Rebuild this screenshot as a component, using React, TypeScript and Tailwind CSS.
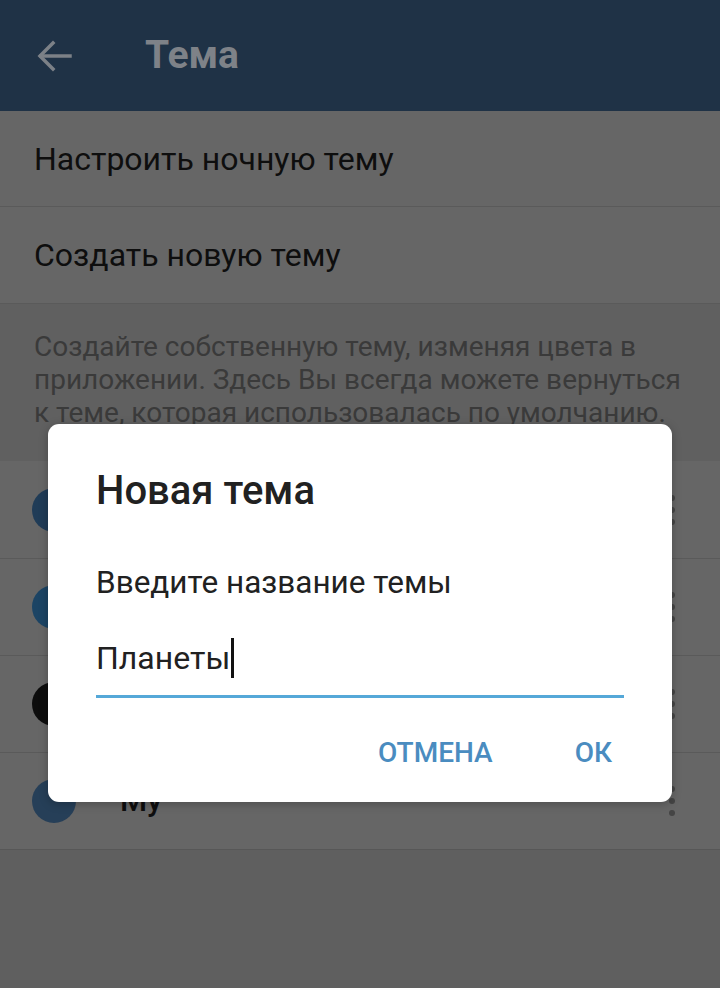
import React from 'react';

// names of the first rows sit fully behind the dialog, so they are left out
const themes = [
  { name: '', color: 'bg-[#203c57]' },
  { name: '', color: 'bg-[#1c4464]' },
  { name: 'Ночная', color: 'bg-[#0d0d0d]' },
  { name: 'Му', color: 'bg-[#263f58]' },
];

function Dots() {
  return (
    <div className="flex flex-col items-center gap-[6px]">
      <span className="h-[6px] w-[6px] rounded-full bg-[#454545]" />
      <span className="h-[6px] w-[6px] rounded-full bg-[#454545]" />
      <span className="h-[6px] w-[6px] rounded-full bg-[#454545]" />
    </div>
  );
}

export default function App() {
  return (
    <div
      className="relative h-[988px] w-[720px] overflow-hidden bg-[#5f5f5f]"
      style={{ fontFamily: 'Roboto, "Noto Sans", sans-serif' }}
    >
      <div className="flex h-[111px] items-center bg-[#1f3246]">
        <svg
          className="ml-[36px]"
          width="38"
          height="34"
          viewBox="0 0 38 34"
          fill="none"
          stroke="#7c8187"
          strokeWidth="3.5"
          strokeLinecap="square"
        >
          <path d="M34 17H5" />
          <path d="M17 4L4 17l13 13" />
        </svg>
        <span className="ml-[71px] text-[39px] font-bold text-[#7e8288]">Тема</span>
      </div>

      <div className="bg-[#666666]">
        <div className="flex h-[96px] items-center border-b border-[#5a5a5a] pl-[34px] text-[32px] text-[#0e0e0e]">
          Настроить ночную тему
        </div>
        <div className="flex h-[96px] items-center pl-[34px] text-[32px] text-[#0e0e0e]">
          Создать новую тему
        </div>
      </div>

      <div className="h-[158px] border-t border-[#5a5a5a] bg-[#606060] pl-[34px] pr-[30px] pt-[26px] text-[28px] leading-[33px] text-[#3a3a3a]">
        Создайте собственную тему, изменяя цвета в приложении. Здесь Вы всегда можете вернуться к теме, которая использовалась по умолчанию.
      </div>

      <div className="border-b border-[#575757] bg-[#666666]">
        {themes.map((t, i) => (
          <div
            key={i}
            className={`flex h-[97px] items-center pl-[32px] pr-[45px] ${i > 0 ? 'border-t border-[#5a5a5a]' : ''}`}
          >
            <span className={`h-[44px] w-[44px] rounded-full ${t.color}`} />
            <span className="ml-[44px] flex-1 text-[31px] font-medium text-[#0e0e0e]">{t.name}</span>
            <Dots />
          </div>
        ))}
      </div>

      <div className="absolute left-[48px] top-[424px] w-[624px] rounded-[11px] bg-white pl-[48px] pr-[48px] shadow-[0_2px_10px_rgba(0,0,0,0.25)]">
        <div className="pt-[44px] text-[40px] font-medium leading-[46px] text-[#212121]">Новая тема</div>
        <div className="mt-[51px] text-[31.5px] leading-[36px] text-[#212121]">Введите название темы</div>
        <div className="mt-[37px] flex h-[40px] items-center text-[32px] text-[#212121]">
          Планеты
          <span className="ml-[1px] h-[40px] w-[3px] bg-[#111111]" />
        </div>
        <div className="mt-[17px] h-[3px] bg-[#55a8d8]" />
        <div className="flex h-[104px] items-center justify-end gap-[82px] pr-[12px] pt-[5px] text-[28px] font-medium text-[#4a8cc0]">
          <span>ОТМЕНА</span>
          <span>ОК</span>
        </div>
      </div>
    </div>
  );
}
